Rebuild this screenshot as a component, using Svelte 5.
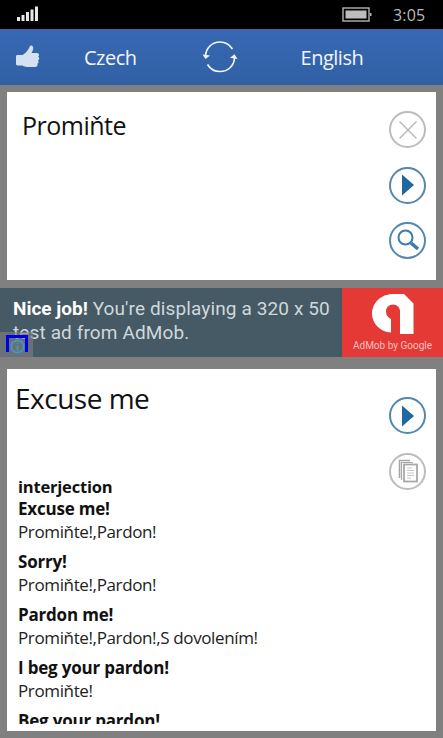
<script>
  const senses = [
    { head: 'Excuse me!', text: 'Promiňte!,Pardon!' },
    { head: 'Sorry!', text: 'Promiňte!,Pardon!' },
    { head: 'Pardon me!', text: 'Promiňte!,Pardon!,S dovolením!' },
    { head: 'I beg your pardon!', text: 'Promiňte!' },
    { head: 'Beg your pardon!', text: 'Promiňte!' }
  ];
</script>

<div class="screen">
  <div class="status">
    <svg class="signal" width="21" height="16" viewBox="0 0 21 16">
      <rect x="0" y="11" width="3" height="4" fill="#e8e8e8"/>
      <rect x="4.500" y="9" width="3" height="6" fill="#e8e8e8"/>
      <rect x="9" y="6" width="3" height="9" fill="#e8e8e8"/>
      <rect x="13.500" y="3.500" width="3" height="11.500" fill="#e8e8e8"/>
      <rect x="18" y="0.500" width="3" height="14.500" fill="#e8e8e8"/>
    </svg>
    <svg class="battery" width="30" height="15" viewBox="0 0 30 15">
      <rect x="1" y="1" width="26" height="13" fill="none" stroke="#b4b4b4" stroke-width="1.400"/>
      <rect x="3.500" y="3.500" width="21" height="8" fill="#bdbdbd"/>
      <rect x="28" y="6" width="1.500" height="3" fill="#b4b4b4"/>
    </svg>
    <span class="time">3:05</span>
  </div>

  <header class="bar">
    <svg class="thumb" width="25" height="25" viewBox="0 0 25 25">
      <path fill="#d5e0f1" d="M1 11.500c0-.8.600-1.400 1.400-1.400h5.200c2.400-1.700 5.200-4.400 6.500-7.200.500-1.200.800-2.400 2-2.400 1.500 0 2.400 1.400 2.100 3.200-.2 1.400-1 3-1.700 4.300h5.500c1.300 0 2.100 1 2.100 2 0 .800-.4 1.400-.9 1.800.600.400 1 1 1 1.800 0 .900-.5 1.500-1.200 1.800.400.400.600.900.600 1.500 0 .900-.6 1.600-1.300 1.900.200.300.300.700.300 1 0 1.300-1 2.200-2.300 2.200H12c-2 0-3.200-.9-4.700-1.500H2.400c-.8 0-1.400-.6-1.400-1.400z"/>
    </svg>
    <span class="lang czech">Czech</span>
    <svg class="swap" width="36" height="34" viewBox="0 0 36 34" fill="none" stroke="#f2f5fb" stroke-width="1.700">
      <path d="M3.500 16C4 8 10 2 18 2c5.500 0 9.500 2.500 12.500 7"/>
      <path d="M32.500 18C32 26 26 31.500 18 31.500c-5.500 0-9.800-2.500-12.500-7"/>
      <path fill="#f2f5fb" stroke="none" d="M0.500 14.500l3 4.500 4.500-3.500zM35.500 19l-3-4.800-4.500 3.500z"/>
    </svg>
    <span class="lang english">English</span>
  </header>

  <section class="card source">
    <div class="word">Promiňte</div>
    <div class="actions">
      <button class="round grey" aria-label="Clear">
        <svg width="36" height="36" viewBox="0 0 36 36"><path d="M9.500 9.500l17 17M26.500 9.500l-17 17" stroke="#b3b3b3" stroke-width="1.300" fill="none"/></svg>
      </button>
      <button class="round blue" aria-label="Play">
        <svg width="36" height="36" viewBox="0 0 36 36"><path d="M12 7.500l12 10.500-12 10.500z" fill="#20669f"/></svg>
      </button>
      <button class="round blue" aria-label="Search">
        <svg width="36" height="36" viewBox="0 0 36 36" fill="none" stroke="#3f7ba8">
          <circle cx="15.500" cy="14.500" r="7" stroke-width="2"/>
          <path d="M21 20l7 6" stroke-width="3.600"/>
        </svg>
      </button>
    </div>
  </section>

  <aside class="ad">
    <div class="ad-text"><b>Nice job!</b> You're displaying a 320 x 50 test ad from AdMob.</div>
    <div class="ad-logo">
      <svg width="42" height="42" viewBox="0 0 42 42">
        <path fill="#fff" d="M21 0h11l9.500 9.500V40H28V17c0-3.500-3-6.500-7-6.500s-7 3-7 7c0 3.500 2 6 5 7.500v13.500C8 38 0 29 0 20 0 9 9 0 21 0z"/>
      </svg>
      <span class="ad-brand">AdMob by Google</span>
    </div>
    <div class="info-box">
      <div class="info-mark">
        <svg width="17" height="15" viewBox="0 0 16 14" fill="none" stroke="#3d9cc4" stroke-width="1.500">
          <circle cx="8" cy="7" r="5.800"/>
          <path d="M8 6v5M8 3.200v1.400"/>
        </svg>
      </div>
    </div>
  </aside>

  <section class="card result">
    <div class="translation">Excuse me</div>
    <div class="actions result-actions">
      <button class="round blue" aria-label="Play">
        <svg width="36" height="36" viewBox="0 0 36 36"><path d="M12 7.500l12 10.500-12 10.500z" fill="#20669f"/></svg>
      </button>
      <button class="round grey" aria-label="Copy">
        <svg width="36" height="36" viewBox="0 0 36 36" fill="none" stroke="#a8a8a8">
          <path d="M20 7.500H9.500V25" stroke-width="1.600"/>
          <path d="M23 9.500H11.500V27" stroke-width="1.200"/>
          <rect x="14" y="11.500" width="13" height="17" stroke-width="1.800"/>
          <path d="M17 15h5M17 17.500h7M17 20h7M17 22.500h7M17 25h4" stroke-width="1" stroke="#c6c6c6"/>
        </svg>
      </button>
    </div>
    <div class="defs">
      <div class="pos">interjection</div>
      {#each senses as s}
        <div class="sense">
          <div class="head">{s.head}</div>
          <div class="text">{s.text}</div>
        </div>
      {/each}
    </div>
  </section>
</div>

<style>
  :global(body) { margin: 0; background: #808080; }
  .screen {
    width: 443px; height: 738px; overflow: hidden;
    background: #808080;
    font-family: "Open Sans", "Noto Sans", sans-serif;
    color: #111;
    display: flex; flex-direction: column;
  }
  .status {
    height: 29px; background: #000; flex: none;
    display: flex; align-items: center;
    padding: 0 0 0 17px; box-sizing: border-box;
  }
  .signal { margin-top: -1px; }
  .battery { margin-left: 304px; }
  .time { margin-left: 21px; color: #b8b8b8; font-size: 16px; letter-spacing: 0.2px; }
  .bar {
    height: 56px; flex: none;
    background: linear-gradient(#3868b3, #3060a4);
    display: flex; align-items: center;
    color: #f2f5fb;
  }
  .thumb { margin-left: 15px; }
  .lang { font-size: 20px; letter-spacing: -0.5px; }
  .czech { margin-left: 44px; }
  .swap { margin-left: 65px; }
  .english { margin-left: 63px; }

  .card { background: #fff; margin: 7px 7px 0; position: relative; }
  .source { height: 188px; flex: none; }
  .word { font-size: 25px; padding: 15px 0 0 15px; line-height: 36px; letter-spacing: -0.5px; color: #111; }
  .actions {
    position: absolute; right: 10px; top: 19px;
    display: flex; flex-direction: column; gap: 18.500px;
  }
  .round {
    width: 37px; height: 37px; border-radius: 50%; padding: 0; margin: 0;
    background: #fff; box-sizing: border-box;
    display: flex; align-items: center; justify-content: center;
  }
  .round svg { flex: none; }
  .grey { border: 2px solid #bcbcbc; }
  .blue { border: 2px solid #5388b0; }

  .ad {
    height: 69px; flex: none; margin-top: 8px; position: relative;
    background: #455a64;
    display: flex; justify-content: space-between;
    font-family: Roboto, sans-serif;
  }
  .ad-text {
    color: #cfd8dc; font-size: 19px; line-height: 24px;
    padding: 9px 0 0 13px; width: 335px; box-sizing: border-box; letter-spacing: 0.12px;
  }
  .ad-text b { color: #fff; font-weight: 700; letter-spacing: 0; }
  .ad-logo {
    width: 101px; background: #e53935; flex: none;
    display: flex; flex-direction: column; align-items: center;
    padding-top: 6px; box-sizing: border-box;
  }
  .ad-logo svg { flex: none; }
  .ad-brand { color: #f5c0bd; font-size: 10px; margin-top: 4px; white-space: nowrap; }
  .info-box {
    position: absolute; left: 0; bottom: 0; width: 33px; height: 25px;
    background: rgba(128,128,128,.6);
  }
  .info-mark {
    position: absolute; left: 6px; top: 3px; width: 22px; height: 17px;
    box-sizing: border-box;
    border: 3px solid #0000e6; border-bottom: 0;
  }
  .info-mark svg { position: absolute; left: -0.500px; top: 1px; }

  .result { margin-top: 12px; height: 362px; flex: none; overflow: hidden; }
  .translation { font-size: 28px; line-height: 38px; padding: 10px 0 0 8px; letter-spacing: -0.5px; color: #111; }
  .result-actions { top: 28px; }
  .defs { position: absolute; left: 11px; top: 107px; right: 0; height: 248px; overflow: hidden; }
  .pos { font-size: 16.500px; font-weight: 700; line-height: 21px; letter-spacing: -0.2px; margin-bottom: 1px; }
  .sense { margin-bottom: 7px; }
  .head { font-size: 17px; font-weight: 700; line-height: 21px; letter-spacing: -0.2px; }
  .text { font-size: 17px; line-height: 25px; letter-spacing: -0.37px; color: #222; }
</style>
